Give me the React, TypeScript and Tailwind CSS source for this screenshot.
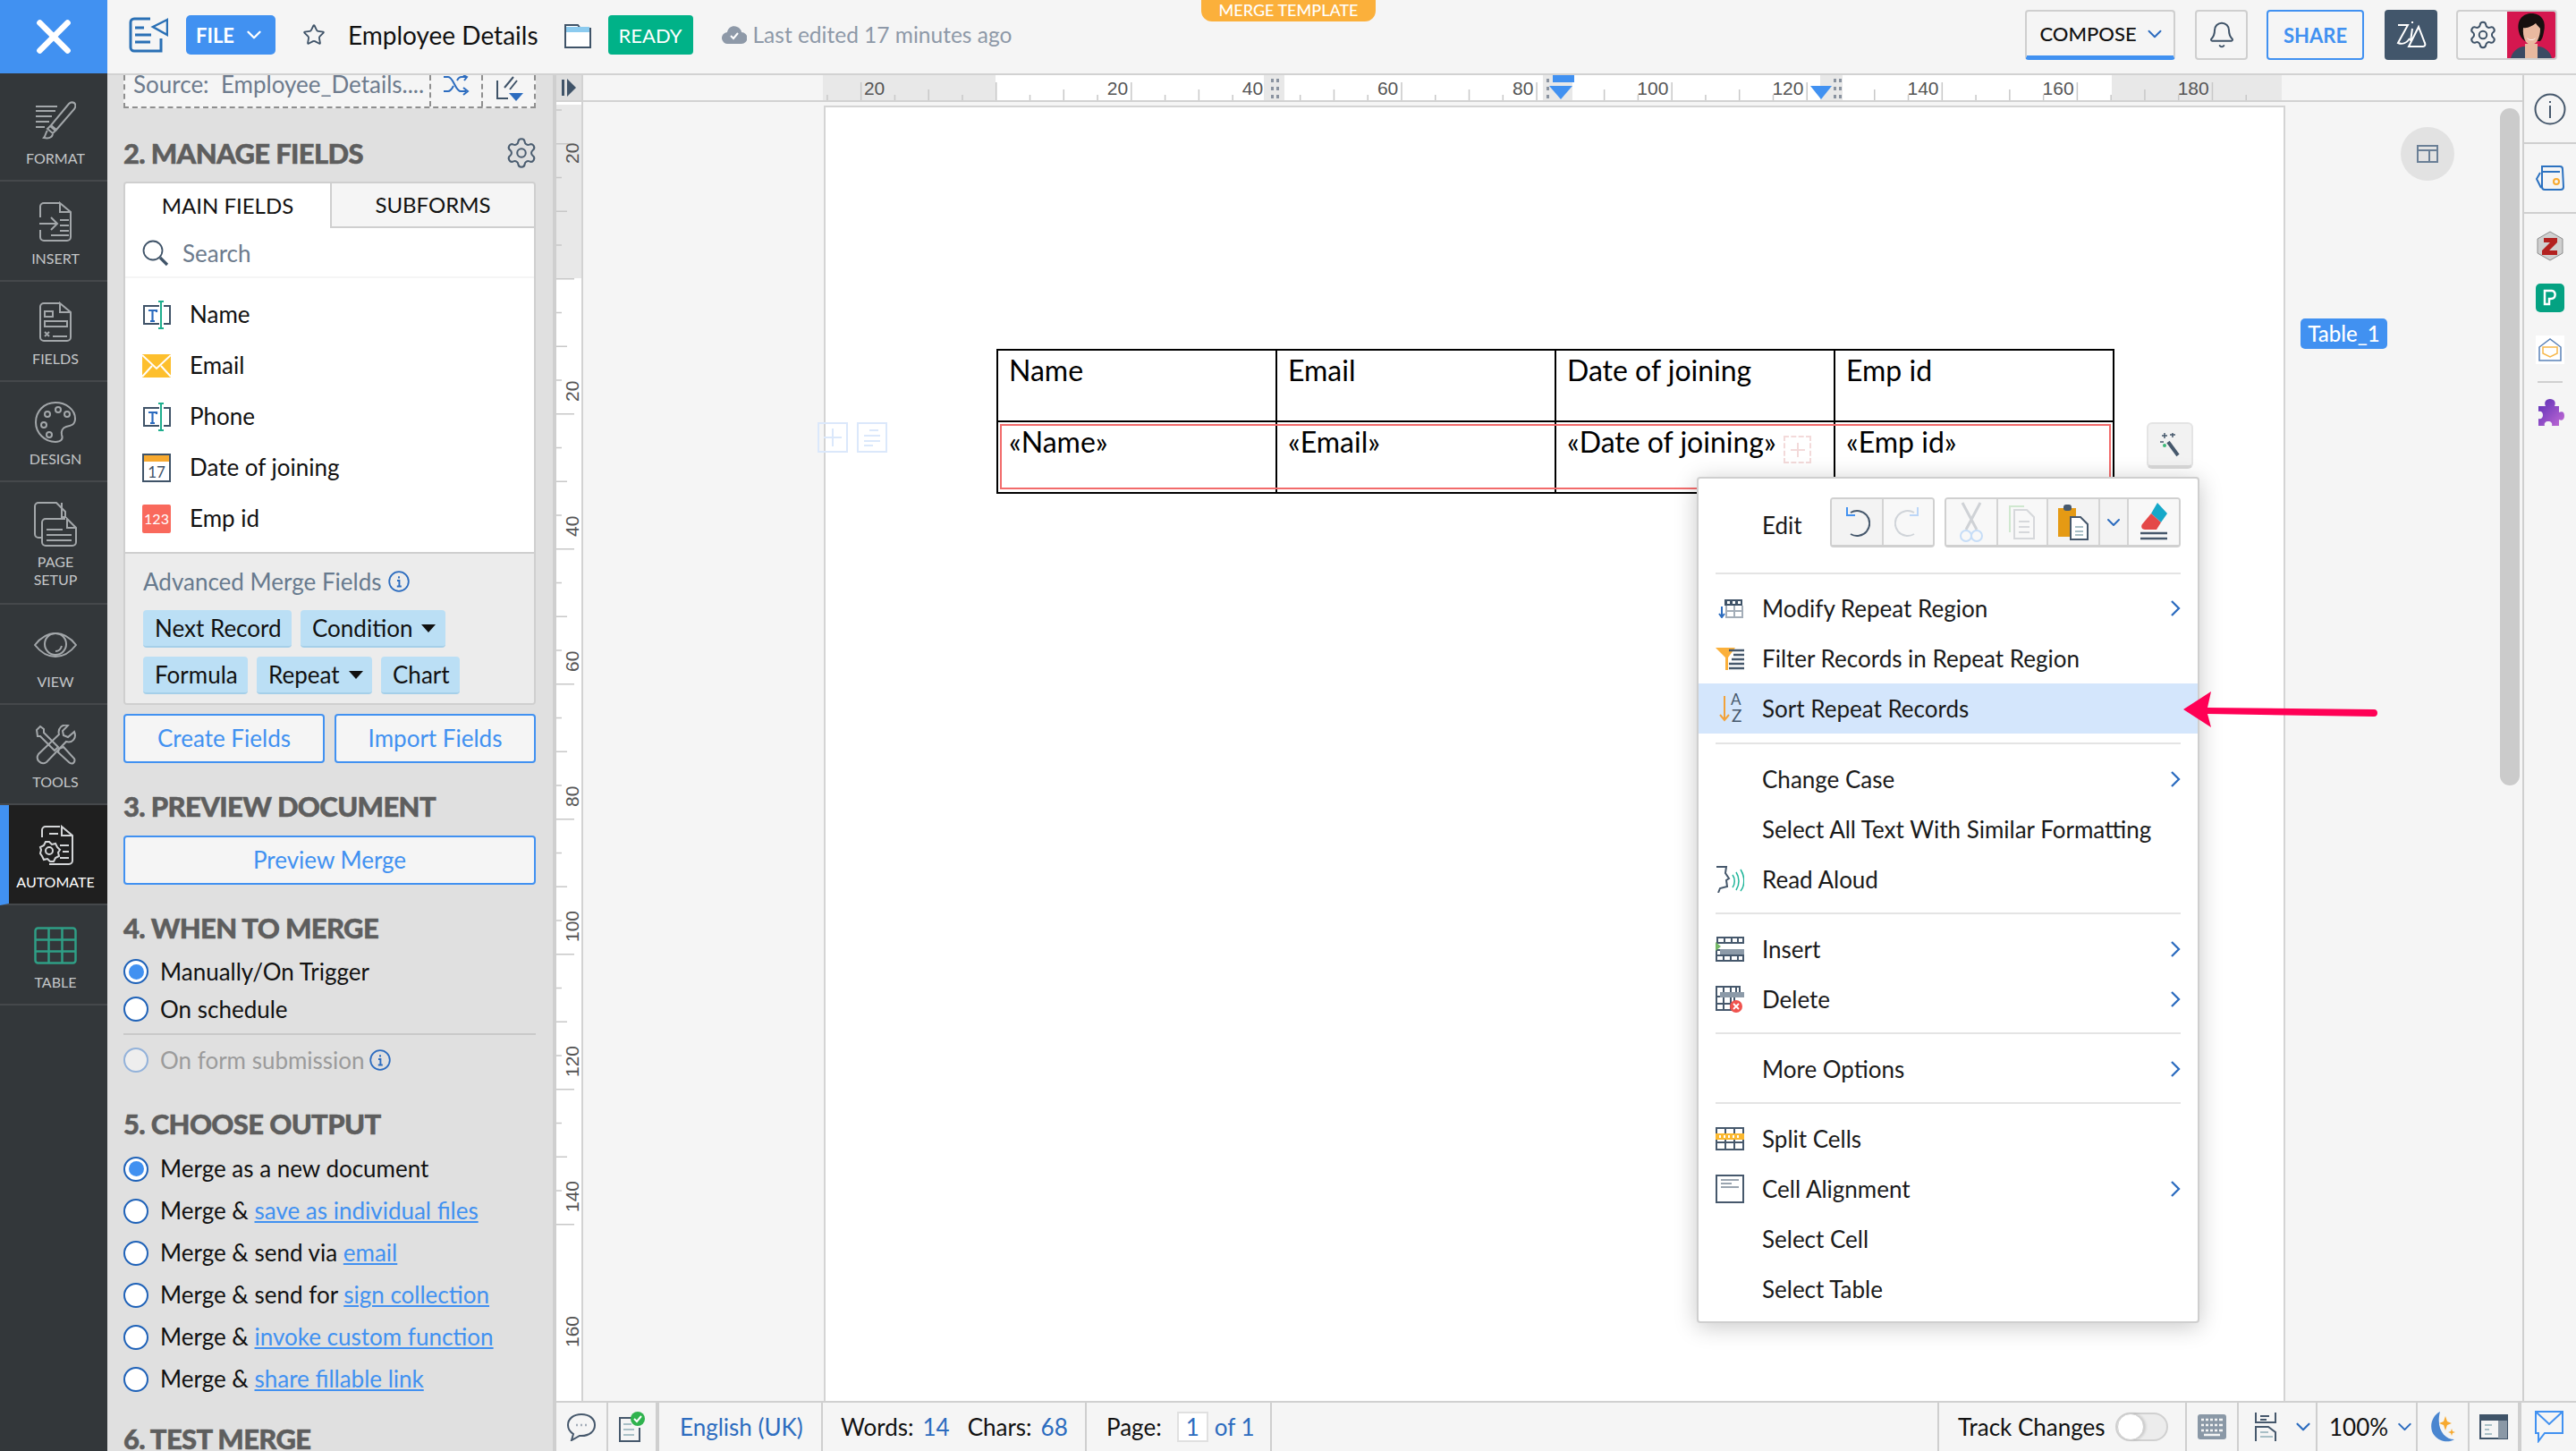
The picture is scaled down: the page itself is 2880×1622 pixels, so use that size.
import React from "react";
import { X, ChevronDown, Star, Bell, Settings } from "lucide-react";

const Svg = ({ w, h, children, className = "" }: { w: number; h: number; children: React.ReactNode; className?: string }) => (
  <svg width={w} height={h} viewBox={`0 0 ${w} ${h}`} fill="none" className={`shrink-0 ${className}`}>{children}</svg>
);

const G = "#a3a7aa";
const sideIcons: Record<string, React.ReactNode> = {
  format: (
    <Svg w={46} h={46}>
      <g stroke={G} strokeWidth="2"><path d="M1 6h24M1 11h22M1 17h18M1 23h15M1 29h10" /><path d="M44 2c2 2 2 4 0 7L24 32l-6-5L38 3c2-2 4-2 6-1Z" /><path d="M17 28l6 5-3 3-6-5Z" /><path d="M14 33c-2 2-2 6-4 8 5 1 9 0 10-4" /></g>
    </Svg>
  ),
  insert: (
    <Svg w={38} h={46}>
      <g stroke={G} strokeWidth="2"><path d="M24 2H6a4 4 0 0 0-4 4v12M2 32v8a4 4 0 0 0 4 4h26a4 4 0 0 0 4-4V12L24 2v10h12" /><path d="M1 25h20M14 18l7 7-7 7M24 21h10M24 27h10M24 33h10M14 38h20" /></g>
    </Svg>
  ),
  fields: (
    <Svg w={38} h={46}>
      <g stroke={G} strokeWidth="2"><path d="M24 2H6a4 4 0 0 0-4 4v34a4 4 0 0 0 4 4h26a4 4 0 0 0 4-4V12L24 2v10h12" /><rect x="7" y="11" width="9" height="6" /><rect x="7" y="22" width="25" height="6" /><path d="M7 34l5 5M12 34l-5 5M16 39h16" /></g>
    </Svg>
  ),
  design: (
    <Svg w={46} h={48}>
      <g stroke={G} strokeWidth="2"><path d="M23 2C10 2 1 12 1 24s10 22 22 22c6 0 9-3 7-8-1-4 1-8 5-9 5-1 10-2 10-9C45 10 35 2 23 2Z" /><circle cx="14" cy="15" r="3" /><circle cx="26" cy="10" r="3" /><circle cx="36" cy="15" r="3" /><circle cx="10" cy="27" r="3" /><circle cx="16" cy="38" r="3" /></g>
    </Svg>
  ),
  page: (
    <Svg w={48} h={50}>
      <g stroke={G} strokeWidth="2"><path d="M9 40H5a4 4 0 0 1-4-4V5a4 4 0 0 1 4-4h20l10 10v6H31V1" /><path d="M35 19H13a4 4 0 0 0-4 4v22a4 4 0 0 0 4 4h30a4 4 0 0 0 4-4V29l-10-10v10h10" /><path d="M14 31h18M14 37h28M14 43h28" /></g>
    </Svg>
  ),
  view: (
    <Svg w={48} h={30}>
      <g stroke={G} strokeWidth="2"><path d="M1 15C8 6 15 2 24 2s16 4 23 13c-7 9-14 13-23 13S8 24 1 15Z" /><circle cx="24" cy="14" r="12" /><path d="M24 22c3 0 6-2 7-6" /></g>
    </Svg>
  ),
  tools: (
    <Svg w={46} h={46}>
      <g stroke={G} strokeWidth="2"><path d="M2 6l4-4 4 3 0 4 16 16-4 4L6 13H3ZM27 27l5-2 12 13c1 2 1 3-1 5-2 1-3 1-5-1L26 31Z" /><path d="M44 8l-7 6-5-2-1-5 6-6c-6-2-12 3-10 10L4 33c-4 6 3 13 9 9L35 19c7 2 12-4 9-11Z" /></g>
    </Svg>
  ),
  automate: (
    <Svg w={42} h={46}>
      <g stroke="#d4d6d8" strokeWidth="2"><path d="M26 2H10a4 4 0 0 0-4 4v8M14 44h22a4 4 0 0 0 4-4V12L28 2v10h12" /><path d="M14 10h10M26 23h10M29 30h7M26 37h10" /><circle cx="14" cy="29" r="4" /><path d="M14 19l3 3 4-1 2 4 3 3-2 3 1 4-4 2-2 4h-4l-3-3-4 1-2-4-2-3 1-4-1-3 4-2 2-4Z" /></g>
    </Svg>
  ),
  table: (
    <Svg w={48} h={42}>
      <g stroke="#2f9e85" strokeWidth="2.5"><rect x="1.5" y="1.5" width="45" height="39" rx="3" /><path d="M1.5 14.5h45M1.5 27.5h45M16.5 1.5v39M31.5 1.5v39" /></g>
    </Svg>
  ),
};

const SideItem = ({ id, label, pt = "pt-[23px]", h = "h-[112px]", active = false, gap = "mt-[9px]" }: { id: string; label: string[]; pt?: string; h?: string; active?: boolean; gap?: string }) => (
  <div className={`${h} ${pt} ${active ? "bg-[#1f1f1f] text-white border-l-[10px] border-[#4191f1] pr-[6px]" : "text-[#c4c6c8] pl-[4px]"} border-b-2 border-b-[#45484b] flex flex-col items-center shrink-0`}>
    <div className="h-[44px] flex items-center justify-center">{sideIcons[id]}</div>
    <div className={`${gap} text-[16px] leading-[20px] text-center`}>{label.map((l) => <div key={l}>{l}</div>)}</div>
  </div>
);

const Heading = ({ children, className = "" }: { children: React.ReactNode; className?: string }) => (
  <div className={`h-[40px] leading-[40px] text-[31px] font-black text-[#5e5e5e] tracking-[-0.65px] [-webkit-text-stroke:0.5px_#5e5e5e] whitespace-nowrap ${className}`}>{children}</div>
);

const Radio = ({ on = false, disabled = false }: { on?: boolean; disabled?: boolean }) => (
  <span className={`w-[28px] h-[28px] rounded-full border-2 flex items-center justify-center shrink-0 ${disabled ? "border-[#93b2da] bg-[#eeeeee]" : "border-[#1f62b8] bg-white"}`}>
    {on && <span className="w-[17px] h-[17px] rounded-full bg-[#4191f1]" />}
  </span>
);

const InfoDot = ({ size = 24 }: { size?: number }) => (
  <svg width={size} height={size} viewBox="0 0 24 24" fill="none" className="shrink-0">
    <circle cx="12" cy="12" r="10.8" stroke="#2c6cbf" strokeWidth="1.8" />
    <path d="M12 6.2v2.2M10 11h2.4v6.5M9.8 17.5h5" stroke="#2c6cbf" strokeWidth="1.9" />
  </svg>
);

const OptRow = ({ on, children }: { on?: boolean; children: React.ReactNode }) => (
  <div className="h-[47px] flex items-center gap-[13px] text-[26px] text-[#111] whitespace-nowrap"><Radio on={on} /><span>{children}</span></div>
);
const L = ({ children }: { children: React.ReactNode }) => <span className="text-[#4191f1] underline underline-offset-[2px] decoration-2">{children}</span>;

const TIcon = () => (
  <Svg w={32} h={32}>
    <path d="M19 6H2v20h17M24 6h7v20h-7" stroke="#3f5368" strokeWidth="2" />
    <path d="M7 11h9v2M11.500 11v12M9 23h5" stroke="#2c6cbf" strokeWidth="2.2" />
    <path d="M18 1h6M18 31h6M21 1v30" stroke="#1fae8e" strokeWidth="2" />
  </Svg>
);

const FieldRow = ({ icon, label }: { icon: React.ReactNode; label: string }) => (
  <div className="h-[57px] pl-[19px] flex items-center gap-[21px] text-[26px] text-[#111]">{icon}<span>{label}</span></div>
);

const Chip = ({ children, w, caret }: { children: React.ReactNode; w: string; caret?: boolean }) => (
  <div className={`${w} h-[42px] rounded-[4px] bg-[#bbdff5] border-b-2 border-[#a5cfe9] flex items-center pl-[13px] text-[26px] text-[#111] whitespace-nowrap`}>
    {children}
    {caret && <span className="ml-[10px] w-0 h-0 border-l-[8px] border-r-[8px] border-t-[9px] border-l-transparent border-r-transparent border-t-[#111]" />}
  </div>
);

const BlueBtn = ({ children, className = "" }: { children: React.ReactNode; className?: string }) => (
  <div className={`h-[55px] border-2 border-[#4191f1] rounded-[4px] bg-[#f5f5f5] text-[#4191f1] text-[26px] flex items-center justify-center ${className}`}>{children}</div>
);

const Panel = () => (
  <div className="w-[502px] h-full shrink-0 bg-[#e0e0e0] border-r-4 border-[#cfcfcf] pl-[18px] pr-[19px] overflow-hidden">
    <div className="h-[37px] shrink-0 bg-[#f5f5f5] border-l-2 border-r-2 border-b-2 border-dashed border-[#8f8f8f] flex">
      <div className="w-[340px] pl-[9px] text-[26px] leading-[20px] text-[#6d7b8d] whitespace-nowrap">Source:&nbsp; Employee_Details....</div>
      <div className="w-[58px] border-l-2 border-dashed border-[#8f8f8f] flex justify-center">
        <Svg w={30} h={26}><path d="M1 2h5c6 0 8 16 14 16h6M1 18h5c3 0 5-4 6-6M16 6c1-2 3-4 5-4h5M23 14l5 4-5 4" stroke="#2c6cbf" strokeWidth="2" /><path d="M23 0l4 2-3 4" stroke="#2c6cbf" strokeWidth="2" /></Svg>
      </div>
      <div className="flex-1 border-l-2 border-dashed border-[#8f8f8f] flex justify-center">
        <Svg w={34} h={30}><path d="M4 6v20h12" stroke="#3f5368" strokeWidth="2" /><path d="M12 14L22 2M18 16l8-10" stroke="#3f5368" strokeWidth="2" /><path d="M17 20h16l-8 9Z" fill="#2c6cbf" /></Svg>
      </div>
    </div>
    <Heading className="mt-[30px] flex items-center justify-between">
      <span>2. MANAGE FIELDS</span>
      <Settings size={38} strokeWidth={1.3} color="#4b5d70" className="-mr-[3px]" />
    </Heading>
    <div className="mt-[12px] border-2 border-[#cfcfcf] rounded-[4px] overflow-hidden">
      <div className="h-[50px] flex text-[24px] text-[#111]">
        <div className="w-[229px] bg-white flex items-center justify-center">MAIN FIELDS</div>
        <div className="flex-1 bg-[#f5f5f5] border-l-2 border-b-2 border-[#cfcfcf] flex items-center justify-center">SUBFORMS</div>
      </div>
      <div className="bg-white">
        <div className="h-[56px] pt-[2px] border-b-2 border-[#f5f5f5] pl-[19px] flex items-center gap-[15px] text-[26px] text-[#6d7b8d]">
          <Svg w={30} h={30}><circle cx="12" cy="12" r="10.500" stroke="#3f5368" strokeWidth="1.800" /><path d="M20 20l8 8" stroke="#3f5368" strokeWidth="3.200" /></Svg>
          <span>Search</span>
        </div>
        <div className="pt-[12px] pb-[9px]">
          <FieldRow icon={<TIcon />} label="Name" />
          <FieldRow icon={<Svg w={32} h={32}><rect x="0" y="3" width="32" height="26" fill="#fdbf2d" /><path d="M0 4l16 15L32 4M0 28l11-12M32 28L21 16" stroke="#fff" strokeWidth="2" /></Svg>} label="Email" />
          <FieldRow icon={<TIcon />} label="Phone" />
          <FieldRow icon={<Svg w={32} h={32}><rect x="1" y="1" width="30" height="30" stroke="#3f5368" strokeWidth="2" fill="#fff" /><rect x="2" y="2" width="28" height="7" fill="#f7a92f" /><text x="16" y="27" textAnchor="middle" fontSize="17" fontFamily="Lato" fill="#3f5368">17</text></Svg>} label="Date of joining" />
          <FieldRow icon={<div className="w-[32px] h-[32px] bg-[#f9695c] rounded-[2px] text-white text-[16px] flex items-center justify-center">123</div>} label="Emp id" />
        </div>
      </div>
      <div className="bg-[#ececec] border-t-2 border-[#cfcfcf] pt-[21px] pb-[10px] pl-[20px]">
        <div className="h-[20px] leading-[20px] flex items-center gap-[8px] text-[26px] text-[#677a8e]"><span>Advanced Merge Fields</span><InfoDot /></div>
        <div className="mt-[22px] flex gap-[10px]"><Chip w="w-[166px]">Next Record</Chip><Chip w="w-[162px]" caret>Condition</Chip></div>
        <div className="mt-[10px] flex gap-[10px]"><Chip w="w-[117px]">Formula</Chip><Chip w="w-[129px]" caret>Repeat</Chip><Chip w="w-[88px]">Chart</Chip></div>
      </div>
    </div>
    <div className="mt-[10px] flex gap-[11px]"><BlueBtn className="flex-1">Create Fields</BlueBtn><BlueBtn className="flex-1">Import Fields</BlueBtn></div>
    <Heading className="mt-[28px]">3. PREVIEW DOCUMENT</Heading>
    <BlueBtn className="mt-[13px]">Preview Merge</BlueBtn>
    <Heading className="mt-[28px]">4. WHEN TO MERGE</Heading>
    <div className="mt-[7px] h-[44px] flex items-center gap-[13px] text-[26px] text-[#111]"><Radio on /><span>Manually/On Trigger</span></div>
    <div className="-mt-[2px] h-[44px] flex items-center gap-[13px] text-[26px] text-[#111]"><Radio /><span>On schedule</span></div>
    <div className="mt-[5px] h-[2px] bg-[#c9c9c9]" />
    <div className="mt-[6px] h-[44px] flex items-center gap-[13px] text-[26px] text-[#9b9b9b]"><Radio disabled /><span>On form submission</span><span className="-ml-[8px]"><InfoDot /></span></div>
    <Heading className="mt-[29px]">5. CHOOSE OUTPUT</Heading>
    <div className="mt-[7px]">
      <OptRow on>Merge as a new document</OptRow>
      <OptRow>Merge &amp; <L>save as individual files</L></OptRow>
      <OptRow>Merge &amp; send via <L>email</L></OptRow>
      <OptRow>Merge &amp; send for <L>sign collection</L></OptRow>
      <OptRow>Merge &amp; <L>invoke custom function</L></OptRow>
      <OptRow>Merge &amp; <L>share fillable link</L></OptRow>
    </div>
    <Heading className="mt-[23px]">6. TEST MERGE</Heading>
  </div>
);

const TopBar = () => (
  <div className="h-[84px] shrink-0 bg-[#f5f5f5] border-b-2 border-[#d2d2d2] flex items-center pl-[24px] pr-[21px] pb-[4px]">
    <Svg w={44} h={40}>
      <path d="M24 2H6a4 4 0 0 0-4 4v28a4 4 0 0 0 4 4h30V24" stroke="#2a70b5" strokeWidth="3" />
      <path d="M7 12h10M7 20h18M7 28h17" stroke="#2a70b5" strokeWidth="3" />
      <path d="M43 3L27 11l16 9Z" stroke="#2a70b5" strokeWidth="2.500" />
    </Svg>
    <div className="ml-[20px] w-[100px] h-[44px] rounded-[5px] bg-[#4191f1] text-white font-bold text-[22px] flex items-center justify-center gap-[9px]">FILE<ChevronDown size={26} strokeWidth={2.2} /></div>
    <Star className="ml-[30px]" size={26} strokeWidth={1.7} color="#3f5368" />
    <div className="ml-[25px] text-[28px] text-[#111] whitespace-nowrap">Employee Details</div>
    <div className="ml-[29px]">
      <Svg w={30} h={30}><path d="M1 4h14l3 4h11v21H1Z" fill="#fff" stroke="#3f5368" strokeWidth="2" /><rect x="2" y="6" width="26" height="6" fill="#8ccbef" /></Svg>
    </div>
    <div className="ml-[19px] w-[95px] h-[44px] rounded-[4px] bg-[#00b288] text-white text-[22px] flex items-center justify-center">READY</div>
    <div className="ml-[32px]">
      <Svg w={28} h={22}><path d="M7 21a6.500 6.500 0 0 1-1-13C7 3 12 0 17 2c3 1 5 4 5 6a6.500 6.500 0 0 1 0 13Z" fill="#8e99a8" /><path d="M10 12l3 3 5-6" stroke="#fff" strokeWidth="2" /></Svg>
    </div>
    <div className="ml-[7px] text-[24.5px] text-[#8e99a8] whitespace-nowrap">Last edited 17 minutes ago</div>
    <div className="flex-1" />
    <div className="w-[168px] h-[56px] rounded-[4px] border-2 border-[#cfcfcf] border-b-[5px] border-b-[#4191f1] text-[#111] text-[22px] font-medium flex items-center justify-center gap-[7px] pl-[6px]">COMPOSE<ChevronDown size={26} strokeWidth={1.8} color="#2c6cbf" /></div>
    <div className="ml-[22px] w-[59px] h-[56px] rounded-[4px] border-2 border-[#cfcfcf] flex items-center justify-center"><Bell size={32} strokeWidth={1.5} color="#3f5368" /></div>
    <div className="ml-[21px] w-[109px] h-[56px] rounded-[4px] border-2 border-[#4191f1] text-[#4191f1] font-bold text-[22px] flex items-center justify-center">SHARE</div>
    <div className="ml-[23px] w-[59px] h-[56px] rounded-[4px] bg-[#42566b] flex items-center justify-center">
      <Svg w={36} h={34}><path d="M3 6h11L3 26c5 2 10 0 13-5M19 2v2M19 10l-2 14M26 8L15 30h16c2 0 3-2 2-4L26 8Z" stroke="#fff" strokeWidth="2" /></Svg>
    </div>
    <div className="ml-[21px] w-[113px] h-[56px] rounded-[4px] border-2 border-[#cfcfcf] flex overflow-hidden">
      <div className="flex-1 flex items-center justify-center"><Settings size={34} strokeWidth={1.4} color="#3f5368" /></div>
      <Svg w={54} h={52}>
        <rect width="54" height="52" fill="#d5174f" />
        <path d="M4 52c2-8 8-12 14-13h18c6 1 12 5 14 13Z" fill="#3b4a63" />
        <path d="M20 52V36h14v16Z" fill="#e7b99f" />
        <path d="M13 22C10 7 20 1 29 2c10 1 15 9 12 21-1 5-2 8-4 10H20c-4-3-6-6-7-11Z" fill="#17100f" />
        <path d="M18 18c5 1 10-2 14-5 2 3 4 4 5 6 0 10-4 18-10 18-6 0-10-8-9-19Z" fill="#e9b9a0" />
        <path d="M22 29c3 3 7 3 10 0-1 4-9 4-10 0Z" fill="#fff" />
      </Svg>
    </div>
  </div>
);

const TX = (k: number) => 461 + k * 37.77;
const TopRuler = () => {
  const ticks = Array.from({ length: 43 }, (_, i) => i - 5);
  return (
    <svg width="2168" height="28" viewBox="0 0 2168 28" fontFamily="Liberation Sans" className="block">
      <rect width="2168" height="28" fill="#f5f5f5" />
      <rect x="268" width="193" height="28" fill="#e8e8e8" />
      <rect x="461" width="1248" height="28" fill="#fff" />
      <rect x="1709" width="190" height="28" fill="#e8e8e8" />
      {ticks.map((k) => {
        const m = ((k % 4) + 4) % 4;
        const h = m === 0 ? 20 : m === 2 ? 12 : 6;
        return <rect key={k} x={TX(k)} y={28 - h} width="1.500" height={h} fill="#c8c8c8" />;
      })}
      <text x={TX(-4) + 4} y="22" fontSize="21" fill="#555">20</text>
      {[1, 2, 3, 4, 5, 6, 7, 8, 9].map((n) => (
        <text key={n} x={TX(n * 4) - 3} y="22" fontSize="21" fill="#555" textAnchor="end">{n * 20}</text>
      ))}
      <rect x="761" width="23" height="28" fill="#e8e8e8" />
      <g fill="#8a93a0"><rect x="769" y="4" width="3" height="4" /><rect x="775" y="4" width="3" height="4" /><rect x="769" y="13" width="3" height="4" /><rect x="775" y="13" width="3" height="4" /><rect x="769" y="22" width="3" height="4" /><rect x="775" y="22" width="3" height="4" /></g>
      <rect x="1073" width="33" height="28" fill="#e8e8e8" />
      <rect x="1383" width="25" height="28" fill="#e8e8e8" />
      <g fill="#8a93a0"><rect x="1077" y="13" width="3" height="4" /><rect x="1077" y="22" width="3" height="4" /><rect x="1077" y="4" width="3" height="4" /><rect x="1398" y="4" width="3" height="4" /><rect x="1404" y="4" width="3" height="4" /><rect x="1398" y="13" width="3" height="4" /><rect x="1404" y="13" width="3" height="4" /><rect x="1398" y="22" width="3" height="4" /><rect x="1404" y="22" width="3" height="4" /></g>
      <rect x="1084" width="24" height="8" fill="#4191f1" />
      <path d="M1080 12h26l-13 15Z" fill="#4191f1" />
      <path d="M1372 12h24l-12 15Z" fill="#4191f1" />
    </svg>
  );
};

const LY = (k: number) => 197 + k * 37.75;
const LeftRuler = () => {
  const ticks = Array.from({ length: 34 }, (_, i) => i - 5);
  return (
    <svg width="28" height="1452" viewBox="0 0 28 1452" fontFamily="Liberation Sans" className="block shrink-0">
      <rect width="28" height="1452" fill="#fff" />
      <rect y="3" width="28" height="194" fill="#e8e8e8" />
      {ticks.map((k) => {
        const m = ((k % 4) + 4) % 4;
        const w = m === 0 ? 20 : m === 2 ? 12 : 6;
        return <rect key={k} x="0" y={LY(k)} width={w} height="1.500" fill="#c8c8c8" />;
      })}
      <text x="25" y="69" fontSize="21" fill="#555" transform="rotate(-90 25 69)">20</text>
      {[1, 2, 3, 4, 5, 6, 7, 8].map((n) => {
        const y = LY(n * 4) - 13;
        return <text key={n} x="25" y={y} fontSize="21" fill="#555" transform={`rotate(-90 25 ${y})`}>{n * 20}</text>;
      })}
    </svg>
  );
};

const cell = "pl-[12px] text-[32px] text-black leading-[44px] border-black whitespace-nowrap";
const Doc = () => (
  <div className="ml-[269px] mt-[4px] w-[1634px] h-[1460px] bg-white border-2 border-[#d4d4d4] pl-[191px] pt-[270px] shrink-0">
    <div className="w-[1250px] border-2 border-black">
      <div className="grid grid-cols-[312px_312px_312px_310px] h-[80px] border-b-2 border-black">
        <div className={`${cell} border-r-2`}>Name</div>
        <div className={`${cell} border-r-2`}>Email</div>
        <div className={`${cell} border-r-2`}>Date of joining</div>
        <div className={cell}>Emp id</div>
      </div>
      <div className="relative grid grid-cols-[312px_312px_312px_310px] h-[78px]">
        <div className="absolute left-[2px] top-[2px] right-[2px] bottom-[3px] border-2 border-[#f26b6b]" />
        <div className={`${cell} border-r-2`}>«Name»</div>
        <div className={`${cell} border-r-2`}>«Email»</div>
        <div className={`${cell} border-r-2`}>«Date of joining»</div>
        <div className={cell}>«Emp id»</div>
      </div>
    </div>
  </div>
);

const ActionIcon = ({ children, w = "w-[58px]", bg = "bg-[#f8f8f8]" }: { children: React.ReactNode; w?: string; bg?: string }) => (
  <div className={`${w} ${bg} border-r-2 border-[#d4d4d4] last:border-r-0 flex items-center justify-center`}>{children}</div>
);

const MenuSep = ({ top = "mt-[9px]", bottom = "mb-[11px]" }: { top?: string; bottom?: string }) => <div className={`${top} ${bottom} mx-[19px] h-[2px] bg-[#e4e4e4]`} />;
const MRow = ({ icon, label, chev, active }: { icon?: React.ReactNode; label: string; chev?: boolean; active?: boolean }) => (
  <div className={`h-[56px] flex items-center pl-[19px] pr-[19px] text-[26px] text-[#1a1a1a] whitespace-nowrap ${active ? "bg-[#d4e6fc]" : ""}`}>
    <div className="w-[52px] flex items-center">{icon}</div>
    <span className="flex-1">{label}</span>
    {chev && <Svg w={12} h={20}><path d="M2 2l8 8-8 8" stroke="#2c6cbf" strokeWidth="2.300" /></Svg>}
  </div>
);

const S = "#46586c";
const Menu = () => (
  <div className="absolute left-[1897px] top-[533px] w-[562px] h-[946px] bg-white border-2 border-[#cfcfcf] rounded-[4px] shadow-[0_4px_26px_rgba(0,0,0,0.22)]">
    <div className="h-[95px] pt-[3px] flex items-center pl-[71px] pr-[19px] text-[26px] text-[#1a1a1a]">
      <span className="flex-1 mt-[6px]">Edit</span>
      <div className="flex h-[56px] w-[117px] border-2 border-b-[3px] border-[#d0d0d0] rounded-[4px] overflow-hidden">
        <ActionIcon w="w-[59px]" bg="bg-[#f3f3f3]">
          <Svg w={30} h={34}><path d="M8 6a14 14 0 1 1 0 24" stroke={S} strokeWidth="2" /><path d="M4 0v9h9" stroke="#4191f1" strokeWidth="2" /></Svg>
        </ActionIcon>
        <ActionIcon w="w-[56px]">
          <Svg w={30} h={34}><path d="M22 6a14 14 0 1 0 0 24" stroke="#d0d4d9" strokeWidth="2" /><path d="M26 0v9h-9" stroke="#bcd6f7" strokeWidth="2" /></Svg>
        </ActionIcon>
      </div>
      <div className="ml-[11px] flex h-[56px] w-[264px] border-2 border-b-[3px] border-[#d0d0d0] rounded-[4px] overflow-hidden">
        <ActionIcon w="w-[58px]">
          <Svg w={26} h={48}><path d="M3 2l16 30M23 2L7 32" stroke="#cfd2d6" strokeWidth="3" /><circle cx="7" cy="39" r="6" stroke="#c6ddf7" strokeWidth="2" /><circle cx="19" cy="39" r="6" stroke="#c6ddf7" strokeWidth="2" /></Svg>
        </ActionIcon>
        <ActionIcon w="w-[56px]">
          <Svg w={30} h={38}><path d="M1 30V1h16" stroke="#cfe8cf" strokeWidth="2" /><path d="M6 5h14l8 8v24H6Z" stroke="#d6d8db" strokeWidth="2" /><path d="M11 18h12M11 24h12M11 30h12" stroke="#d6d8db" strokeWidth="2" /></Svg>
        </ActionIcon>
        <ActionIcon w="w-[58px]" bg="bg-[#f3f3f3]">
          <Svg w={34} h={40}><rect x="0" y="4" width="20" height="32" fill="#e59a14" /><rect x="6" y="0" width="9" height="7" rx="3" fill={S} /><path d="M14 14h11l8 8v17H14Z" fill="#fff" stroke={S} strokeWidth="2" /><path d="M19 25h9M19 30h9M19 34h9" stroke="#a8bfc6" strokeWidth="2" /></Svg>
        </ActionIcon>
        <ActionIcon w="w-[32px]" bg="bg-[#f3f3f3]"><ChevronDown size={24} strokeWidth={2} color="#2c6cbf" /></ActionIcon>
        <ActionIcon w="flex-1" bg="bg-[#f8f8f8]">
          <Svg w={32} h={48}><path d="M20 2l11 12-7 10-11-10Z" fill="#15a8c9" /><path d="M13 14l11 10-5 8H6c-3 0-5-3-3-6Z" fill="#e44848" /><path d="M1 36h30M1 42h30" stroke={S} strokeWidth="2.500" /></Svg>
        </ActionIcon>
      </div>
    </div>
    <MenuSep top="mt-[10px]" bottom="mb-[10px]" />
    <MRow label="Modify Repeat Region" chev icon={<Svg w={30} h={22} className="ml-[3px]"><path d="M7 1h20v7H7Z" fill="#3f5368" /><path d="M10 3h3v3h-3ZM16 3h3v3h-3ZM22 3h3v3h-3Z" fill="#fff" /><path d="M9 8v13h18V8M9 14h18M18 8v13" stroke="#a3adb8" strokeWidth="2" /><path d="M4 9v12M1 17l3 4 3-4" stroke="#2c6cbf" strokeWidth="2" /></Svg>} />
    <MRow label="Filter Records in Repeat Region" icon={<Svg w={32} h={25}><path d="M0 0h22l-8 11v14h-3V11Z" fill="#fbb03b" /><path d="M15 3h17M20 8h12M18 13h14M15 18h17M15 23h17" stroke={S} strokeWidth="2.300" /></Svg>} />
    <MRow active label="Sort Repeat Records" icon={<div className="relative w-[32px] h-[30px] ml-[3px]"><Svg w={14} h={30}><path d="M7 1v27M2 22l5 6 5-6" stroke="#f2a23a" strokeWidth="2" /></Svg><span className="absolute left-[14px] top-[-5px] text-[17px] leading-[20px] text-[#46586c]">A</span><span className="absolute left-[15px] top-[13px] text-[19px] leading-[20px] text-[#46586c]">Z</span></div>} />
    <MenuSep top="mt-[10px]" />
    <MRow label="Change Case" chev />
    <MRow label="Select All Text With Similar Formatting" />
    <MRow label="Read Aloud" icon={<Svg w={32} h={30}><path d="M1 1h11l-1 7 4 6-3 2 1 7-8 2-2 5" stroke={S} strokeWidth="2" /><path d="M19 10c3 4 3 10 0 14M23 7c4 6 4 14 0 20M28 4c5 8 5 18 0 24" stroke="#1fb59a" strokeWidth="1.500" /></Svg>} />
    <MenuSep />
    <MRow label="Insert" chev icon={<Svg w={32} h={28}><path d="M2 1h29v6H2ZM1 15h30v12H1ZM1 21h30M9 15v12M17 15v12M25 15v12M10 1v6M18 1v6M25 1v6" stroke={S} strokeWidth="2" /><rect x="5" y="14" width="27" height="6" fill="#8c9aa8" /><path d="M0 6l6 5-6 5Z" fill="#74b866" /></Svg>} />
    <MRow label="Delete" chev icon={<Svg w={32} h={30}><path d="M1 1h26v11H1ZM1 12h20v15H1ZM1 20h20M9 1v26M17 1v26M23 1v6" stroke={S} strokeWidth="2" /><rect x="5" y="7" width="27" height="6" fill="#8c9aa8" /><circle cx="23" cy="23" r="7" fill="#f0534e" /><path d="M20 20l6 6M26 20l-6 6" stroke="#fff" strokeWidth="1.800" /></Svg>} />
    <MenuSep />
    <MRow label="More Options" chev />
    <MenuSep />
    <MRow label="Split Cells" icon={<Svg w={32} h={26}><path d="M1 1h30v24H1ZM1 9h30M1 17h30M11 1v24M21 1v24" stroke={S} strokeWidth="2" /><rect x="0" y="7" width="32" height="7" fill="#fbb82f" /><path d="M5 9v3M10 9v3M15 9v3M20 9v3M25 9v3" stroke="#fff" strokeWidth="2" /></Svg>} />
    <MRow label="Cell Alignment" chev icon={<Svg w={32} h={32}><rect x="1" y="1" width="30" height="30" stroke={S} strokeWidth="2" /><path d="M6 6h20M6 10h12M6 14h20" stroke="#9aa5b0" strokeWidth="2" /></Svg>} />
    <MRow label="Select Cell" />
    <MRow label="Select Table" />
  </div>
);

const StatusCell = ({ w, children, className = "" }: { w: string; children?: React.ReactNode; className?: string }) => (
  <div className={`${w} shrink-0 h-full border-r-2 border-[#cfcfcf] flex items-center ${className}`}>{children}</div>
);

const StatusBar = () => (
  <div className="h-[56px] shrink-0 bg-[#f5f5f5] border-t-2 border-[#d0d0d0] flex text-[26px] text-[#111] whitespace-nowrap">
    <StatusCell w="w-[58px]" className="justify-center">
      <Svg w={32} h={32}><path d="M16 2C7 2 1 7 1 14c0 5 3 8 6 10l-2 7 9-5h2c9 0 15-5 15-12S25 2 16 2Z" stroke={S} strokeWidth="2" /><path d="M10 14h2M15 14h2M20 14h2" stroke="#a3adb8" strokeWidth="2.500" /></Svg>
    </StatusCell>
    <StatusCell w="w-[57px]" className="justify-center border-r-4">
      <Svg w={30} h={34}><path d="M16 7H1v26h22V18" stroke={S} strokeWidth="2" /><path d="M5 14h9M5 20h12M5 26h12" stroke="#a8bfc6" strokeWidth="2" /><circle cx="21" cy="8" r="8" fill="#2fb34e" /><path d="M17 8l3 3 5-6" stroke="#fff" strokeWidth="2" /></Svg>
    </StatusCell>
    <StatusCell w="w-[183px]" className="pl-[23px] text-[#2c6cbf]">English (UK)</StatusCell>
    <StatusCell w="w-[295px]" className="pl-[20px]"><span>Words:</span><span className="ml-[10px] text-[#2c6cbf]">14</span><span className="ml-[20px]">Chars:</span><span className="ml-[10px] text-[#2c6cbf]">68</span></StatusCell>
    <StatusCell w="w-[207px]" className="pl-[22px]"><span>Page:</span><span className="ml-[17px] w-[35px] h-[34px] bg-white border-2 border-[#e0e0e0] flex items-center justify-center text-[#2c6cbf]">1</span><span className="ml-[7px] text-[#2c6cbf]">of 1</span></StatusCell>
    <StatusCell w="w-[746px]" />
    <StatusCell w="w-[277px]" className="pl-[21px]"><span>Track Changes</span>
      <span className="ml-[11px] w-[59px] h-[32px] rounded-full bg-[#ececec] border-2 border-[#d0d0d0] flex items-center"><span className="w-[30px] h-[30px] rounded-full bg-white border border-[#d0d0d0] shadow-[2px_0_3px_rgba(0,0,0,0.15)]" /></span>
    </StatusCell>
    <StatusCell w="w-[58px]" className="justify-center">
      <Svg w={32} h={28}><rect width="32" height="28" rx="3" fill="#8a98a6" /><path d="M4 6h3M9 6h3M14 6h3M19 6h3M24 6h4M4 12h3M9 12h3M14 12h3M19 12h3M24 12h4M4 18h3M9 18h3M14 18h3M19 18h3M24 18h4M7 23h18" stroke="#f5f5f5" strokeWidth="2.500" /></Svg>
    </StatusCell>
    <StatusCell w="w-[88px]" className="pl-[18px] gap-[17px]">
      <Svg w={24} h={32}><path d="M1 0v11h22V0M6 4h10M6 8h7" stroke={S} strokeWidth="2" /><path d="M1 32V16h14l8 6v10" stroke={S} strokeWidth="2" /><path d="M6 22h9M6 27h14" stroke="#a8bfc6" strokeWidth="2" /></Svg>
      <ChevronDown size={26} strokeWidth={2} color="#2c6cbf" />
    </StatusCell>
    <StatusCell w="w-[112px]" className="pl-[13px] gap-[6px]"><span>100%</span><ChevronDown size={26} strokeWidth={2} color="#2c6cbf" /></StatusCell>
    <StatusCell w="w-[58px]" className="justify-center">
      <Svg w={30} h={36}><path d="M12 1C2 6-1 20 6 28c6 7 16 8 22 4C17 32 7 20 12 1Z" fill="#4a86d0" /><path d="M18 6l2 6 5 2-5 2-2 6-2-6-5-2 5-2ZM25 20l1 3 3 1-3 1-1 3-1-3-3-1 3-1Z" fill="#f7a92f" /></Svg>
    </StatusCell>
    <StatusCell w="w-[58px]" className="justify-center border-r-4">
      <Svg w={32} h={28}><rect x="1" y="1" width="30" height="26" stroke="#3f5368" strokeWidth="2" /><rect x="1" y="1" width="30" height="6" fill="#3f5368" /><rect x="21" y="7" width="10" height="20" fill="#8a98a6" /><path d="M6 12h8M6 17h5M6 22h8" stroke="#a8bfc6" strokeWidth="2" /></Svg>
    </StatusCell>
    <div className="flex-1 flex items-center justify-center">
      <Svg w={32} h={36}><path d="M1 1h30v24H11l-7 9v-9H1ZM1 1l15 14L31 1" stroke="#4191f1" strokeWidth="2" /></Svg>
    </div>
  </div>
);

const Rail = () => (
  <div className="w-[60px] shrink-0 bg-[#f5f5f5] border-l-2 border-[#cfcfcf] flex flex-col">
    <div className="h-[77px] border-b-2 border-[#cfcfcf] flex items-center justify-center">
      <Svg w={36} h={36}><circle cx="18" cy="18" r="16.500" stroke={S} strokeWidth="2" /><path d="M18 9v2M18 14v14" stroke={S} strokeWidth="2" /></Svg>
    </div>
    <div className="h-[78px] border-b-2 border-[#cfcfcf] flex items-center justify-center">
      <Svg w={34} h={30}><path d="M8 2h20c2 0 3 1 3 3l1 20c0 2-1 3-3 3H11c-2 0-3-1-3-3Z" stroke="#2c72c0" strokeWidth="2" /><path d="M8 8h20M6 9L2 16l5 10" stroke="#2c72c0" strokeWidth="2" /><circle cx="24" cy="19" r="3" stroke="#f7a92f" strokeWidth="2" /></Svg>
    </div>
    <div className="pt-[19px] flex flex-col items-center">
      <Svg w={30} h={34}><path d="M15 1l14 8v16l-14 8L1 25V9Z" fill="#cfcfcf" stroke="#8c8c8c" /><path d="M8 8h15v5l-9 9h9v5H6v-5l9-9H8Z" fill="#b3211f" /></Svg>
      <div className="mt-[25px] w-[32px] h-[32px] rounded-[5px] bg-[#04a282] flex items-center justify-center">
        <Svg w={16} h={20}><path d="M2 2h8c5 0 5 9-1 9H7v6H2Z" stroke="#fff" strokeWidth="2.500" /></Svg>
      </div>
      <div className="mt-[26px] w-[32px] h-[32px] bg-white flex items-center justify-center">
        <Svg w={26} h={26}><path d="M1 10L13 1l12 9v15H1Z" stroke="#5b82b8" strokeWidth="1.500" /><path d="M5 10h16v7l-8 4-8-4Z" stroke="#f7b84b" strokeWidth="1.500" /></Svg>
      </div>
      <div className="mt-[19px] w-[28px] h-[2px] bg-[#cfcfcf]" />
      <div className="mt-[18px]">
        <Svg w={32} h={32}>
          <defs><linearGradient id="pz" x1="0" y1="0" x2="1" y2="1"><stop offset="0" stopColor="#5a2fb5" /><stop offset="1" stopColor="#c46bd6" /></linearGradient></defs>
          <path d="M3 8h8c-2-4 0-8 5-8s7 4 5 8h5v7c4-2 6 0 6 4s-3 6-6 4v7h-8c1-3-1-5-4-5s-5 2-4 5H3v-8c3 1 5-1 5-4S6 13 3 14Z" fill="url(#pz)" />
        </Svg>
      </div>
    </div>
  </div>
);

export default function App() {
  return (
    <div className="relative w-[2880px] h-[1622px] overflow-hidden flex bg-[#f5f5f5] font-['Lato','Noto_Sans',sans-serif] text-[#111]">
      <div className="w-[120px] h-full shrink-0 bg-[#33373a] flex flex-col">
        <div className="h-[82px] shrink-0 bg-[#4191f1] flex items-center justify-center"><X size={62} strokeWidth={2.6} color="#fff" /></div>
        <SideItem id="format" label={["FORMAT"]} pt="pt-[32px]" h="h-[121px]" />
        <SideItem id="insert" label={["INSERT"]} />
        <SideItem id="fields" label={["FIELDS"]} />
        <SideItem id="design" label={["DESIGN"]} />
        <SideItem id="page" label={["PAGE", "SETUP"]} pt="pt-[25px]" h="h-[137px]" gap="mt-[10px]" />
        <SideItem id="view" label={["VIEW"]} />
        <SideItem id="tools" label={["TOOLS"]} />
        <SideItem id="automate" label={["AUTOMATE"]} active />
        <SideItem id="table" label={["TABLE"]} />
      </div>
      <div className="flex-1 min-w-0 flex flex-col">
        <TopBar />
        <div className="flex-1 min-h-0 flex">
          <Panel />
          <div className="flex-1 min-w-0 flex flex-col">
            <div className="flex-1 min-h-0 flex">
              <div className="flex-1 min-w-0 flex flex-col">
                <div className="h-[30px] shrink-0 flex border-b-2 border-[#d2d2d2]">
                  <div className="w-[30px] h-[28px] shrink-0 bg-[#dedede] border-r-2 border-[#d2d2d2] flex items-center justify-center">
                    <Svg w={16} h={20}><rect x="0" y="1" width="3" height="18" fill="#3f5368" /><path d="M6 0l10 10L6 20Z" fill="#3f5368" /></Svg>
                  </div>
                  <TopRuler />
                </div>
                <div className="flex-1 min-h-0 flex overflow-hidden">
                  <div className="w-[30px] shrink-0 border-r-2 border-[#d2d2d2]"><LeftRuler /></div>
                  <div className="flex-1 min-w-0 bg-[#f5f5f5] overflow-hidden"><Doc /></div>
                </div>
              </div>
              <Rail />
            </div>
            <StatusBar />
          </div>
        </div>
      </div>

      {/* overlays */}
      <div className="absolute left-[1343px] top-0 w-[195px] h-[24px] pb-[2px] bg-[#fbb03b] rounded-b-[12px] text-white text-[18px] font-medium flex items-center justify-center">MERGE TEMPLATE</div>
      <div className="absolute left-[914px] top-[472px] w-[34px] h-[34px] border-2 border-[#dbe8fb] flex items-center justify-center">
        <Svg w={22} h={22}><path d="M11 1v20M1 11h20" stroke="#dbe8fb" strokeWidth="2" /></Svg>
      </div>
      <div className="absolute left-[958px] top-[472px] w-[34px] h-[34px] border-2 border-[#dbe8fb] flex items-center justify-center">
        <Svg w={22} h={22}><path d="M8 3h10M2 9h18M2 15h18M2 20h10" stroke="#dbe8fb" strokeWidth="2" /></Svg>
      </div>
      <div className="absolute left-[1994px] top-[487px] w-[31px] h-[31px] border-2 border-dashed border-[#f3dada] flex items-center justify-center">
        <Svg w={16} h={16}><path d="M8 0v16M0 8h16" stroke="#f3dada" strokeWidth="2" /></Svg>
      </div>
      <div className="absolute left-[2400px] top-[472px] w-[52px] h-[52px] rounded-[6px] bg-[#f2f2f2] border-2 border-[#e4e4e4] border-b-4 border-b-[#d8d8d8] flex items-center justify-center">
        <Svg w={26} h={28}><path d="M11 11l11 15" stroke="#46586c" strokeWidth="4" /><path d="M7 1v6M4 4h6M16 1v5M13 3h6M2 11h4" stroke="#46586c" strokeWidth="1.500" /><circle cx="7" cy="15" r="2" fill="#3cb878" /></Svg>
      </div>
      <div className="absolute left-[2572px] top-[356px] w-[97px] h-[34px] rounded-[5px] bg-[#4191f1] text-white text-[24px] font-medium flex items-center justify-center">Table_1</div>
      <div className="absolute left-[2684px] top-[142px] w-[60px] h-[60px] rounded-full bg-[#e2e2e2] flex items-center justify-center">
        <Svg w={24} h={20}><path d="M1 1h22v18H1ZM1 6h22M14 6v13" stroke="#6a7f96" strokeWidth="2" /></Svg>
      </div>
      <div className="absolute left-[2795px] top-[121px] w-[22px] h-[757px] rounded-full bg-[#cbcbcb]" />
      <Menu />
      <svg className="absolute left-[2436px] top-[770px]" width="226" height="46" viewBox="0 0 226 46" fill="none">
        <path d="M5 23L36 3l-4 18 186 2c3 0 4 2 4 4s-1 4-4 4L32 28l4 15Z" fill="#ff0055" />
      </svg>
    </div>
  );
}
